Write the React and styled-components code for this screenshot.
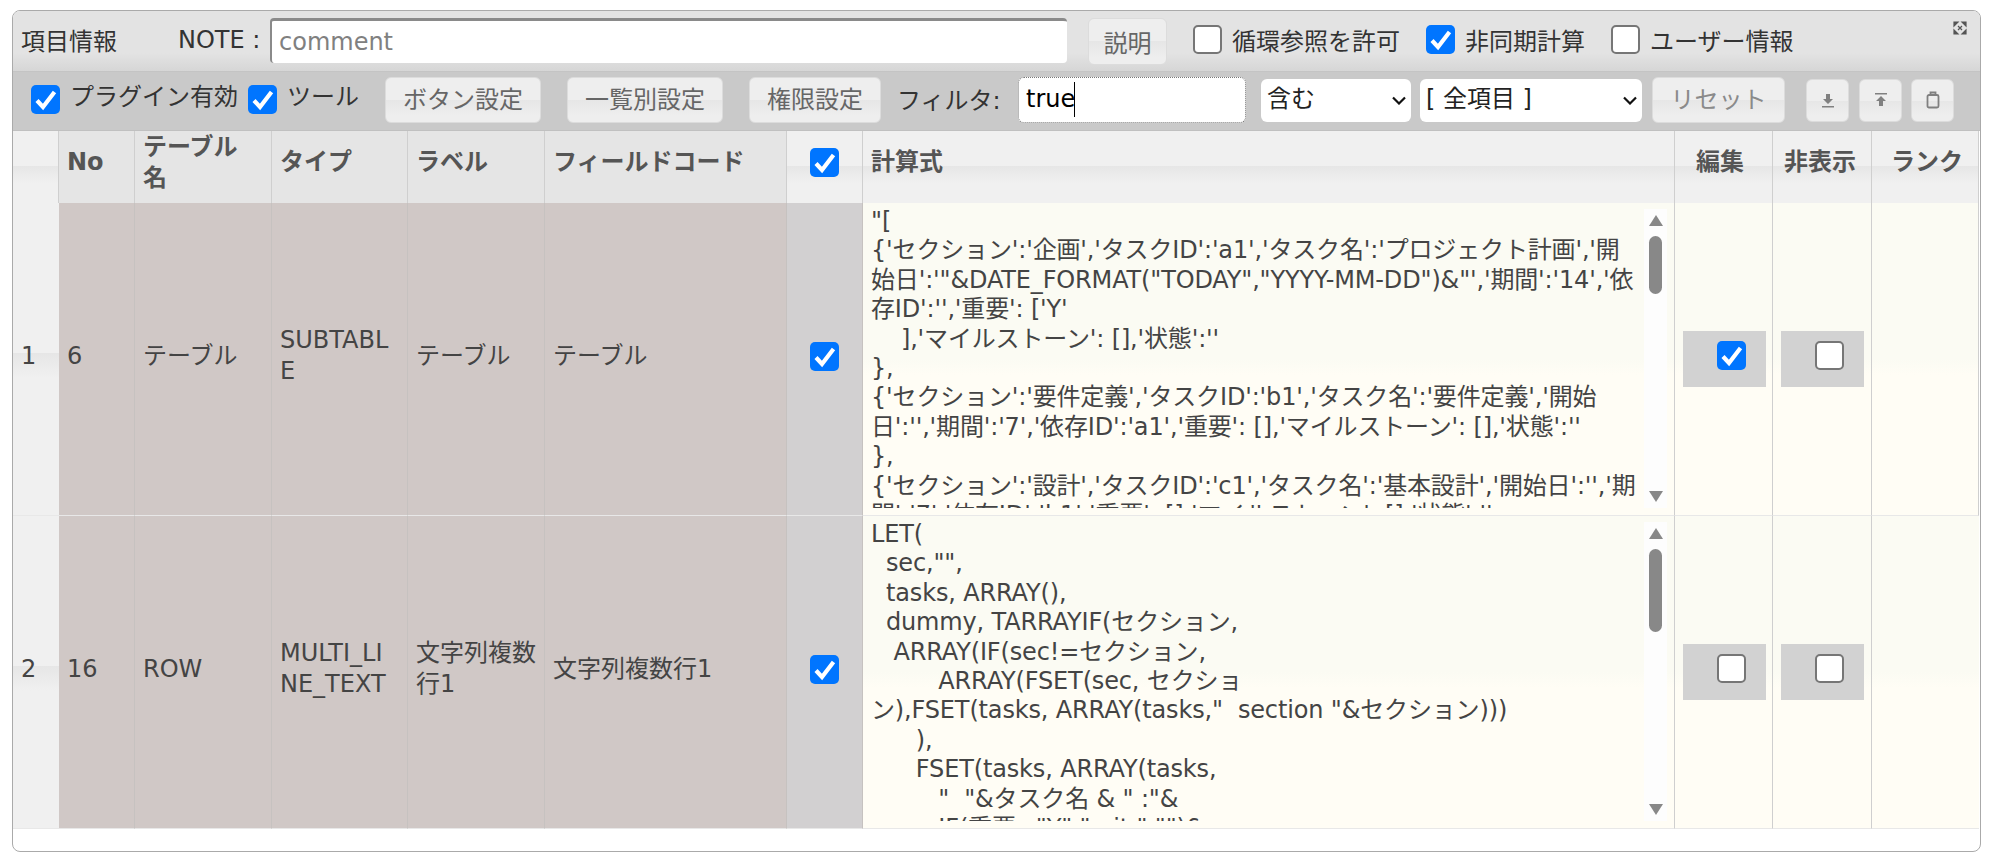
import React from 'react'
import styled, { createGlobalStyle } from 'styled-components'

const GlobalStyle = createGlobalStyle`
  html, body { margin: 0; padding: 0; background: #fff; }
  body {
    font-family: "DejaVu Sans", "Noto Sans CJK JP", sans-serif;
    font-size: 24px;
    color: #333;
  }
`

const TICK = `url("data:image/svg+xml,%3Csvg xmlns='http://www.w3.org/2000/svg' viewBox='0 0 29 29'%3E%3Cpath d='M6 15.5l6 6.5L23.5 7' fill='none' stroke='%23fff' stroke-width='4.2'/%3E%3C/svg%3E")`
const CHEVRON = `url("data:image/svg+xml,%3Csvg xmlns='http://www.w3.org/2000/svg' viewBox='0 0 14 9'%3E%3Cpath d='M1 1.5l6 6 6-6' fill='none' stroke='%23111' stroke-width='2.2'/%3E%3C/svg%3E")`

const Panel = styled.div`
  position: relative;
  box-sizing: border-box;
  width: 1969px;
  height: 842px;
  margin: 10px 0 0 12px;
  border: 1px solid #aaa;
  border-radius: 8px;
  overflow: hidden;
`

const TitleBar = styled.div`
  display: flex;
  align-items: center;
  box-sizing: border-box;
  height: 61px;
  padding: 0 0 3px 8px;
  background: linear-gradient(#e3e3e3 70%, #d6d6d6);
  border-bottom: 1px solid #c4c4c4;
`

const Title = styled.span`
  width: 157px;
  flex: none;
`

const NoteLabel = styled.span`
  width: 92px;
  flex: none;
`

const NoteInput = styled.input`
  box-sizing: border-box;
  width: 797px;
  height: 45px;
  margin-top: 2px;
  padding: 0 7px;
  font: inherit;
  color: #333;
  background: #fff;
  border: 0;
  border-top: 3px solid #8a8a8a;
  border-left: 2px solid #8a8a8a;
  border-radius: 4px;
  &::placeholder { color: #808080; opacity: 1; }
`

const Button = styled.button`
  box-sizing: border-box;
  flex: none;
  width: ${p => p.$w}px;
  height: ${p => p.$h || 46}px;
  margin-left: ${p => p.$ml || 0}px;
  padding: 0;
  font: inherit;
  color: ${p => p.$muted ? '#8a8a8a' : '#666'};
  background: linear-gradient(#eeeeee 50%, #e6e6e6 50%, #eeeeee 85%);
  border: 1px solid #dcdcdc;
  border-radius: 6px;
`

const NoteButton = styled(Button)`
  margin-top: 4px;
`

const ToolButton = styled(Button)`
  padding-bottom: 5px;
`

const IconButton = styled(Button)`
  display: flex;
  align-items: center;
  justify-content: center;
  width: 43px;
  height: 43px;
  & svg { width: 16px; height: 18px; }
`

const Check = styled.input.attrs({ type: 'checkbox', readOnly: true })`
  appearance: none;
  box-sizing: border-box;
  flex: none;
  width: 29px;
  height: 29px;
  margin: 0;
  background: #fff;
  border: 2.5px solid #767676;
  border-radius: 5px;
  &:checked {
    background: #0075ff ${TICK} center / 100% no-repeat;
    border: 0;
  }
`

const CheckLabel = styled.label`
  display: flex;
  align-items: center;
  gap: 10px;
  flex: none;
  margin-left: ${p => p.$ml || 0}px;
`

// toolbar labels sit a little above their checkbox
const ToolLabel = styled(CheckLabel)`
  align-items: flex-start;
  line-height: 29px;
  margin-bottom: 3px;
  & > input { margin-top: 2px; }
`

const ExpandIcon = styled.svg`
  position: absolute;
  top: 10px;
  right: 13px;
  width: 14px;
  height: 14px;
`

const ToolBar = styled.div`
  display: flex;
  align-items: center;
  box-sizing: border-box;
  height: 59px;
  padding: 0 0 2px 18px;
  background: #c9c9c9;
  border-bottom: 1px solid #c0c0c0;
`

const FilterLabel = styled.span`
  flex: none;
  margin-left: 16px;
  padding-bottom: 4px;
  width: 121px;
`

const FilterBox = styled.div`
  position: relative;
  flex: none;
  width: 228px;
  height: 46px;
`

const FilterInput = styled.input`
  box-sizing: border-box;
  width: 100%;
  height: 100%;
  padding: 0 7px 3px;
  font: inherit;
  color: #000;
  background: #fff;
  border: 1px dotted #777;
  border-radius: 6px;
`

const Caret = styled.span`
  position: absolute;
  left: 56px;
  top: 5px;
  width: 1px;
  height: 35px;
  background: #000;
`

const Select = styled.select`
  appearance: none;
  box-sizing: border-box;
  flex: none;
  width: ${p => p.$w}px;
  height: 43px;
  margin-left: ${p => p.$ml}px;
  padding: 0 0 3px 6px;
  font: inherit;
  color: #222;
  background: #fff ${CHEVRON} right 5px center / 14px 9px no-repeat;
  border: 0;
  border-radius: 6px;
`

const Grid = styled.div`
  display: grid;
  grid-template-columns: 46px 76px 137px 136px 137px 242px 76px 812px 98px 99px 107px;
  grid-template-rows: 72px 313px 313px;
`

const HeadCell = styled.div`
  display: flex;
  align-items: center;
  box-sizing: border-box;
  padding: 0 ${p => p.$plain ? 20 : 8}px 9px ${p => p.$pl || 8}px;
  line-height: 31px;
  font-weight: 700;
  color: #555;
  border-right: 1px solid #cfcfcf;
  background: ${p => p.$plain
    ? '#e5e5e5'
    : 'linear-gradient(#f0f0f0 48%, #e6e6e6 48%, #f0f0f0 72%)'};
  justify-content: ${p => p.$center ? 'center' : 'flex-start'};
  &:last-child { border-right: 0; }
`

const Cell = styled.div`
  display: flex;
  align-items: center;
  box-sizing: border-box;
  padding: 0 8px 6px;
  line-height: 31px;
  color: #444;
  word-break: break-all;
  border-right: 1px solid #c6c2c0;
  border-bottom: 1px solid #e8e8e8;
  background: ${p => p.$bg};
  justify-content: ${p => p.$center ? 'center' : 'flex-start'};
`

const IndexCell = styled(Cell)`
  background: linear-gradient(#f0f0f0 48%, #e6e6e6 48%, #f0f0f0 56%);
  border-right: 0;
`

const FormulaCell = styled.div`
  display: flex;
  box-sizing: border-box;
  padding: 6px 7px 7px 8px;
  border-right: 1px solid #cfcfcf;
  border-bottom: 1px solid #e8e8e8;
  background: linear-gradient(#fbfbf3 50%, #fffdf5 55%);
`

const Formula = styled.textarea.attrs({ readOnly: true, wrap: 'off' })`
  flex: 1;
  min-width: 0;
  box-sizing: border-box;
  margin: -2px 0 0;
  padding: 0;
  font: inherit;
  line-height: 29.4px;
  letter-spacing: -0.15px;
  color: #444;
  background: transparent;
  border: 0;
  outline: 0;
  resize: none;
  overflow: hidden;
  white-space: pre;
`

const ScrollTrack = styled.div`
  display: flex;
  flex-direction: column;
  align-items: center;
  flex: none;
  width: 23px;
  padding: 6px 0;
  box-sizing: border-box;
  background: #fdfdfd;
`

const Arrow = styled.span`
  flex: none;
  width: 0;
  height: 0;
  border-left: 7px solid transparent;
  border-right: 7px solid transparent;
  border-${p => p.$down ? 'top' : 'bottom'}: 11px solid #888;
`

const Thumb = styled.span`
  flex: none;
  width: 13px;
  height: ${p => p.$h}px;
  margin-top: 10px;
  margin-bottom: auto;
  background: #888;
  border-radius: 7px;
`

const FlagCell = styled.div`
  display: flex;
  align-items: center;
  justify-content: center;
  box-sizing: border-box;
  border-right: 1px solid #cfcfcf;
  border-bottom: 1px solid #e8e8e8;
  background: linear-gradient(#fbfbf3 50%, #fffdf5 55%);
  &:last-child { border-right: 0; }
`

const FlagBox = styled.div`
  display: flex;
  justify-content: flex-end;
  box-sizing: border-box;
  width: 83px;
  height: 56px;
  margin-left: 1px;
  padding: 10px 20px 0 0;
  background: #d2d2d2;
`

const formula1 = `"[
{'セクション':'企画','タスクID':'a1','タスク名':'プロジェクト計画','開
始日':'"&DATE_FORMAT("TODAY","YYYY-MM-DD")&"','期間':'14','依
存ID':'','重要': ['Y'
    ],'マイルストーン': [],'状態':''
},
{'セクション':'要件定義','タスクID':'b1','タスク名':'要件定義','開始
日':'','期間':'7','依存ID':'a1','重要': [],'マイルストーン': [],'状態':''
},
{'セクション':'設計','タスクID':'c1','タスク名':'基本設計','開始日':'','期
間':'7','依存ID':'b1','重要': [],'マイルストーン': [],'状態':''`

const formula2 = `LET(
  sec,"",
  tasks, ARRAY(),
  dummy, TARRAYIF(セクション,
   ARRAY(IF(sec!=セクション,
         ARRAY(FSET(sec, セクショ
ン),FSET(tasks, ARRAY(tasks,"  section "&セクション)))
      ),
      FSET(tasks, ARRAY(tasks,
         "  "&タスク名 & " :"&
         IF(重要="Y","crit,","")&`

const BROWN = '#d0c8c6'
const GREY = '#d2d0d1'

const Row = ({ index, no, name, type, label, code, formula, thumb, edit }) => (
  <>
    <IndexCell>{index}</IndexCell>
    <Cell $bg={BROWN}>{no}</Cell>
    <Cell $bg={BROWN}>{name}</Cell>
    <Cell $bg={BROWN}>{type}</Cell>
    <Cell $bg={BROWN}>{label}</Cell>
    <Cell $bg={BROWN}>{code}</Cell>
    <Cell $bg={GREY} $center><Check defaultChecked /></Cell>
    <FormulaCell>
      <Formula defaultValue={formula} />
      <ScrollTrack>
        <Arrow />
        <Thumb $h={thumb} />
        <Arrow $down />
      </ScrollTrack>
    </FormulaCell>
    <FlagCell><FlagBox><Check defaultChecked={edit} /></FlagBox></FlagCell>
    <FlagCell><FlagBox><Check /></FlagBox></FlagCell>
    <FlagCell />
  </>
)

const App = () => (
  <>
    <GlobalStyle />
    <Panel>
      <TitleBar>
        <Title>項目情報</Title>
        <NoteLabel>NOTE :</NoteLabel>
        <NoteInput placeholder="comment" />
        <NoteButton $w={79} $h={47} $ml={21}>説明</NoteButton>
        <CheckLabel $ml={26}><Check />循環参照を許可</CheckLabel>
        <CheckLabel $ml={26}><Check defaultChecked />非同期計算</CheckLabel>
        <CheckLabel $ml={26}><Check />ユーザー情報</CheckLabel>
        <ExpandIcon viewBox="0 0 14 14" fill="#555" stroke="#555" strokeWidth="1.2">
          <path d="M1 1h4L1 5zM13 1v4L9 1zM13 13H9l4-4zM1 13V9l4 4z" />
          <path d="M5 5l4 4M9 5l-4 4" />
        </ExpandIcon>
      </TitleBar>
      <ToolBar>
        <ToolLabel><Check defaultChecked />プラグイン有効</ToolLabel>
        <ToolLabel $ml={10}><Check defaultChecked />ツール</ToolLabel>
        <ToolButton $w={156} $ml={26}>ボタン設定</ToolButton>
        <ToolButton $w={156} $ml={26}>一覧別設定</ToolButton>
        <ToolButton $w={132} $ml={26}>権限設定</ToolButton>
        <FilterLabel>フィルタ:</FilterLabel>
        <FilterBox>
          <FilterInput defaultValue="true" />
          <Caret />
        </FilterBox>
        <Select $w={150} $ml={15}><option>含む</option></Select>
        <Select $w={222} $ml={9}><option>[ 全項目 ]</option></Select>
        <ToolButton $w={133} $ml={10} $muted>リセット</ToolButton>
        <IconButton $w={43} $ml={21}>
          <svg viewBox="0 0 16 18" fill="#808080">
            <path d="M6 3h4v5h3l-5 5-5-5h3z" />
            <path d="M2 15h12v1.6H2z" />
          </svg>
        </IconButton>
        <IconButton $w={43} $ml={10}>
          <svg viewBox="0 0 16 18" fill="#808080">
            <path d="M2 2h12v1.6H2z" />
            <path d="M8 5l5 5h-3v5H6v-5H3z" />
          </svg>
        </IconButton>
        <IconButton $w={43} $ml={9}>
          <svg viewBox="0 0 16 18" fill="none" stroke="#808080" strokeWidth="1.8">
            <rect x="2.5" y="4" width="11" height="12.5" rx="1.5" />
            <path d="M5.5 3.5V1.5h5v2" />
          </svg>
        </IconButton>
      </ToolBar>
      <Grid>
        <HeadCell />
        <HeadCell $plain>No</HeadCell>
        <HeadCell $plain>テーブル名</HeadCell>
        <HeadCell $plain>タイプ</HeadCell>
        <HeadCell $plain>ラベル</HeadCell>
        <HeadCell $plain>フィールドコード</HeadCell>
        <HeadCell $center><Check defaultChecked /></HeadCell>
        <HeadCell>計算式</HeadCell>
        <HeadCell $pl={21}>編集</HeadCell>
        <HeadCell $pl={11}>非表示</HeadCell>
        <HeadCell $pl={19}>ランク</HeadCell>
        <Row index="1" no="6" name="テーブル" type="SUBTABLE" label="テーブル" code="テーブル" formula={formula1} thumb={58} edit />
        <Row index="2" no="16" name="ROW" type="MULTI_LINE_TEXT" label="文字列複数行1" code="文字列複数行1" formula={formula2} thumb={83} />
      </Grid>
    </Panel>
  </>
)

export default App
